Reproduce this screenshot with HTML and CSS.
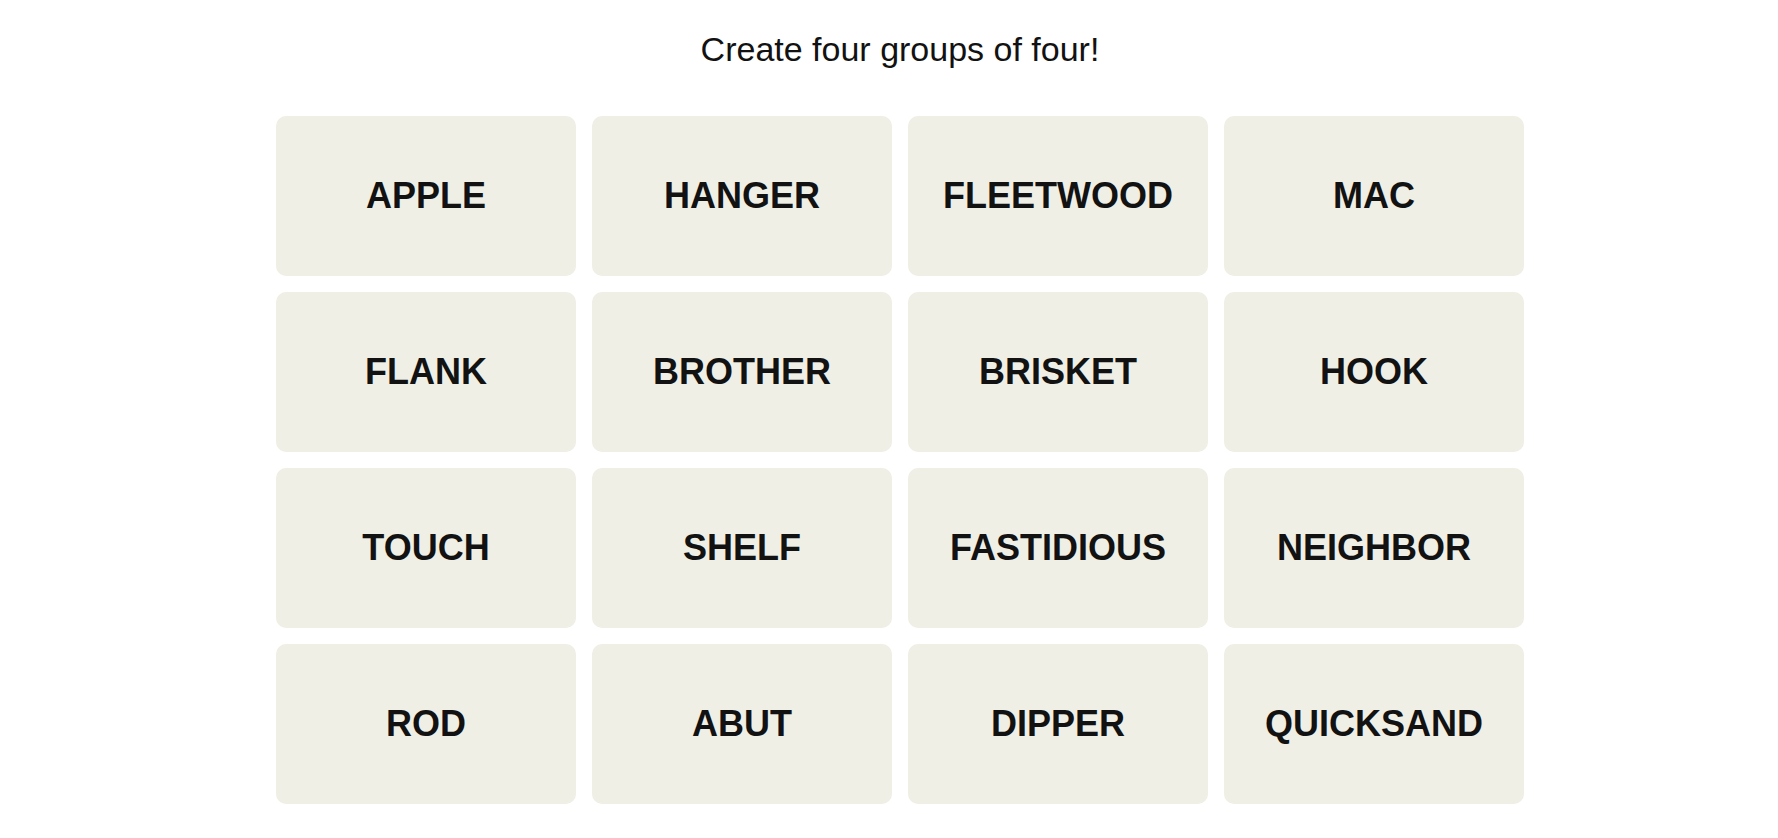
FILE: index.html
```html
<!DOCTYPE html>
<html lang="en">
<head>
    <meta charset="UTF-8">
    <meta name="viewport" content="width=device-width, initial-scale=1.0">
    <title>Connections</title>
    <link rel="stylesheet" href="styles.css">
</head>
<body>

<main class="game">

    <p class="prompt">Create four groups of four!</p>

    <section class="board">
        <div class="card">APPLE</div>
        <div class="card">HANGER</div>
        <div class="card">FLEETWOOD</div>
        <div class="card">MAC</div>

        <div class="card">FLANK</div>
        <div class="card">BROTHER</div>
        <div class="card">BRISKET</div>
        <div class="card">HOOK</div>

        <div class="card">TOUCH</div>
        <div class="card">SHELF</div>
        <div class="card">FASTIDIOUS</div>
        <div class="card">NEIGHBOR</div>

        <div class="card">ROD</div>
        <div class="card">ABUT</div>
        <div class="card">DIPPER</div>
        <div class="card">QUICKSAND</div>
    </section>

</main>

</body>
</html>
```

FILE: styles.css
```css
*{
    box-sizing: border-box;
}

body{
    margin: 0;
    padding-left: 22px;
    background-color: #fff;
    color: #121212;
    font-family: "Liberation Sans", Arial, sans-serif;
}

.game{
    width: 1248px;
    margin: 0 auto;
}

.prompt{
    margin: 0;
    padding-top: 29px;
    font-size: 34px;
    line-height: 40px;
    text-align: center;
}

.board{
    margin-top: 47px;
    display: grid;
    grid-template-columns: repeat(4, 300px);
    grid-auto-rows: 160px;
    gap: 16px;
}

.card{
    display: flex;
    align-items: center;
    justify-content: center;
    background-color: #efefe6;
    border-radius: 10px;
    font-size: 36px;
    font-weight: 700;
    text-transform: uppercase;
}
```
